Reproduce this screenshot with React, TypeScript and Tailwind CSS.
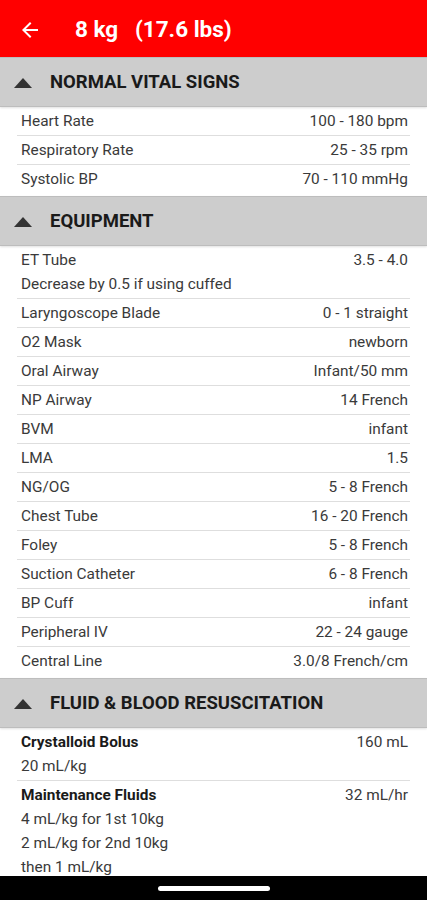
import React from 'react';

type Row = { label: string; value: string; notes?: string[]; bold?: boolean };

const vitals: Row[] = [
  { label: 'Heart Rate', value: '100 - 180 bpm' },
  { label: 'Respiratory Rate', value: '25 - 35 rpm' },
  { label: 'Systolic BP', value: '70 - 110 mmHg' },
];

const equipment: Row[] = [
  { label: 'ET Tube', value: '3.5 - 4.0', notes: ['Decrease by 0.5 if using cuffed'] },
  { label: 'Laryngoscope Blade', value: '0 - 1 straight' },
  { label: 'O2 Mask', value: 'newborn' },
  { label: 'Oral Airway', value: 'Infant/50 mm' },
  { label: 'NP Airway', value: '14 French' },
  { label: 'BVM', value: 'infant' },
  { label: 'LMA', value: '1.5' },
  { label: 'NG/OG', value: '5 - 8 French' },
  { label: 'Chest Tube', value: '16 - 20 French' },
  { label: 'Foley', value: '5 - 8 French' },
  { label: 'Suction Catheter', value: '6 - 8 French' },
  { label: 'BP Cuff', value: 'infant' },
  { label: 'Peripheral IV', value: '22 - 24 gauge' },
  { label: 'Central Line', value: '3.0/8 French/cm' },
];

const fluids: Row[] = [
  { label: 'Crystalloid Bolus', value: '160 mL', notes: ['20 mL/kg'], bold: true },
  {
    label: 'Maintenance Fluids',
    value: '32 mL/hr',
    notes: ['4 mL/kg for 1st 10kg', '2 mL/kg for 2nd 10kg', 'then 1 mL/kg'],
    bold: true,
  },
];

const SectionHeader: React.FC<{ title: string }> = ({ title }) => (
  <div className="h-[50px] flex items-center bg-[#cdcdcd] border-y border-[#bdbdbd] shadow-[0_1px_2px_rgba(0,0,0,0.12)]">
    <svg width="18" height="10" viewBox="0 0 18 10" className="ml-[14px] mr-[18px] mt-[2px]">
      <path d="M0 10 L9 0 L18 10 Z" fill="#333" />
    </svg>
    <span className="text-[18.5px] font-bold text-[#1a1a1a] mt-[2px]">{title}</span>
  </div>
);

const DataRow: React.FC<{ row: Row; last: boolean }> = ({ row, last }) => {
  const multi = !!row.notes;
  return (
    <div className={`mx-[17px] pl-[4px] pr-[2px] ${last ? '' : 'border-b border-[#dedede]'}`}>
      {multi ? (
        <div className="py-[2px] leading-[24px]">
          <div className="flex justify-between">
            <span className={row.bold ? 'font-bold text-[#1a1a1a]' : 'text-[#3a3a3a]'}>{row.label}</span>
            <span className="text-[#3a3a3a]">{row.value}</span>
          </div>
          {row.notes!.map((n) => (
            <div key={n} className="text-[#3a3a3a]">{n}</div>
          ))}
        </div>
      ) : (
        <div className="h-[28px] flex items-center justify-between text-[#3a3a3a] pt-[1px]">
          <span>{row.label}</span>
          <span>{row.value}</span>
        </div>
      )}
    </div>
  );
};

const Section: React.FC<{ title: string; rows: Row[] }> = ({ title, rows }) => (
  <div>
    <SectionHeader title={title} />
    <div className="pb-[3px]">
      {rows.map((r, i) => (
        <DataRow key={r.label} row={r} last={i === rows.length - 1} />
      ))}
    </div>
  </div>
);

export default function App() {
  return (
    <div className="w-[427px] h-[900px] bg-white flex flex-col overflow-hidden text-[15.4px] font-['Roboto',sans-serif]">
      <div className="h-[57px] shrink-0 bg-[#ff0000] flex items-center">
        <svg width="24" height="24" viewBox="0 0 24 24" className="ml-[18px] mt-[2px]">
          <path d="M20 11H7.83l5.59-5.59L12 4l-8 8 8 8 1.41-1.41L7.83 13H20v-2z" fill="#fff" />
        </svg>
        <span className="ml-[33px] mt-[2px] text-white text-[22.5px] font-bold whitespace-pre">8 kg   (17.6 lbs)</span>
      </div>
      <div className="flex-1 overflow-hidden">
        <Section title="NORMAL VITAL SIGNS" rows={vitals} />
        <Section title="EQUIPMENT" rows={equipment} />
        <Section title="FLUID & BLOOD RESUSCITATION" rows={fluids} />
      </div>
      <div className="h-[24px] shrink-0 bg-black flex items-center justify-center">
        <div className="w-[112px] h-[5px] rounded-full bg-white" />
      </div>
    </div>
  );
}
